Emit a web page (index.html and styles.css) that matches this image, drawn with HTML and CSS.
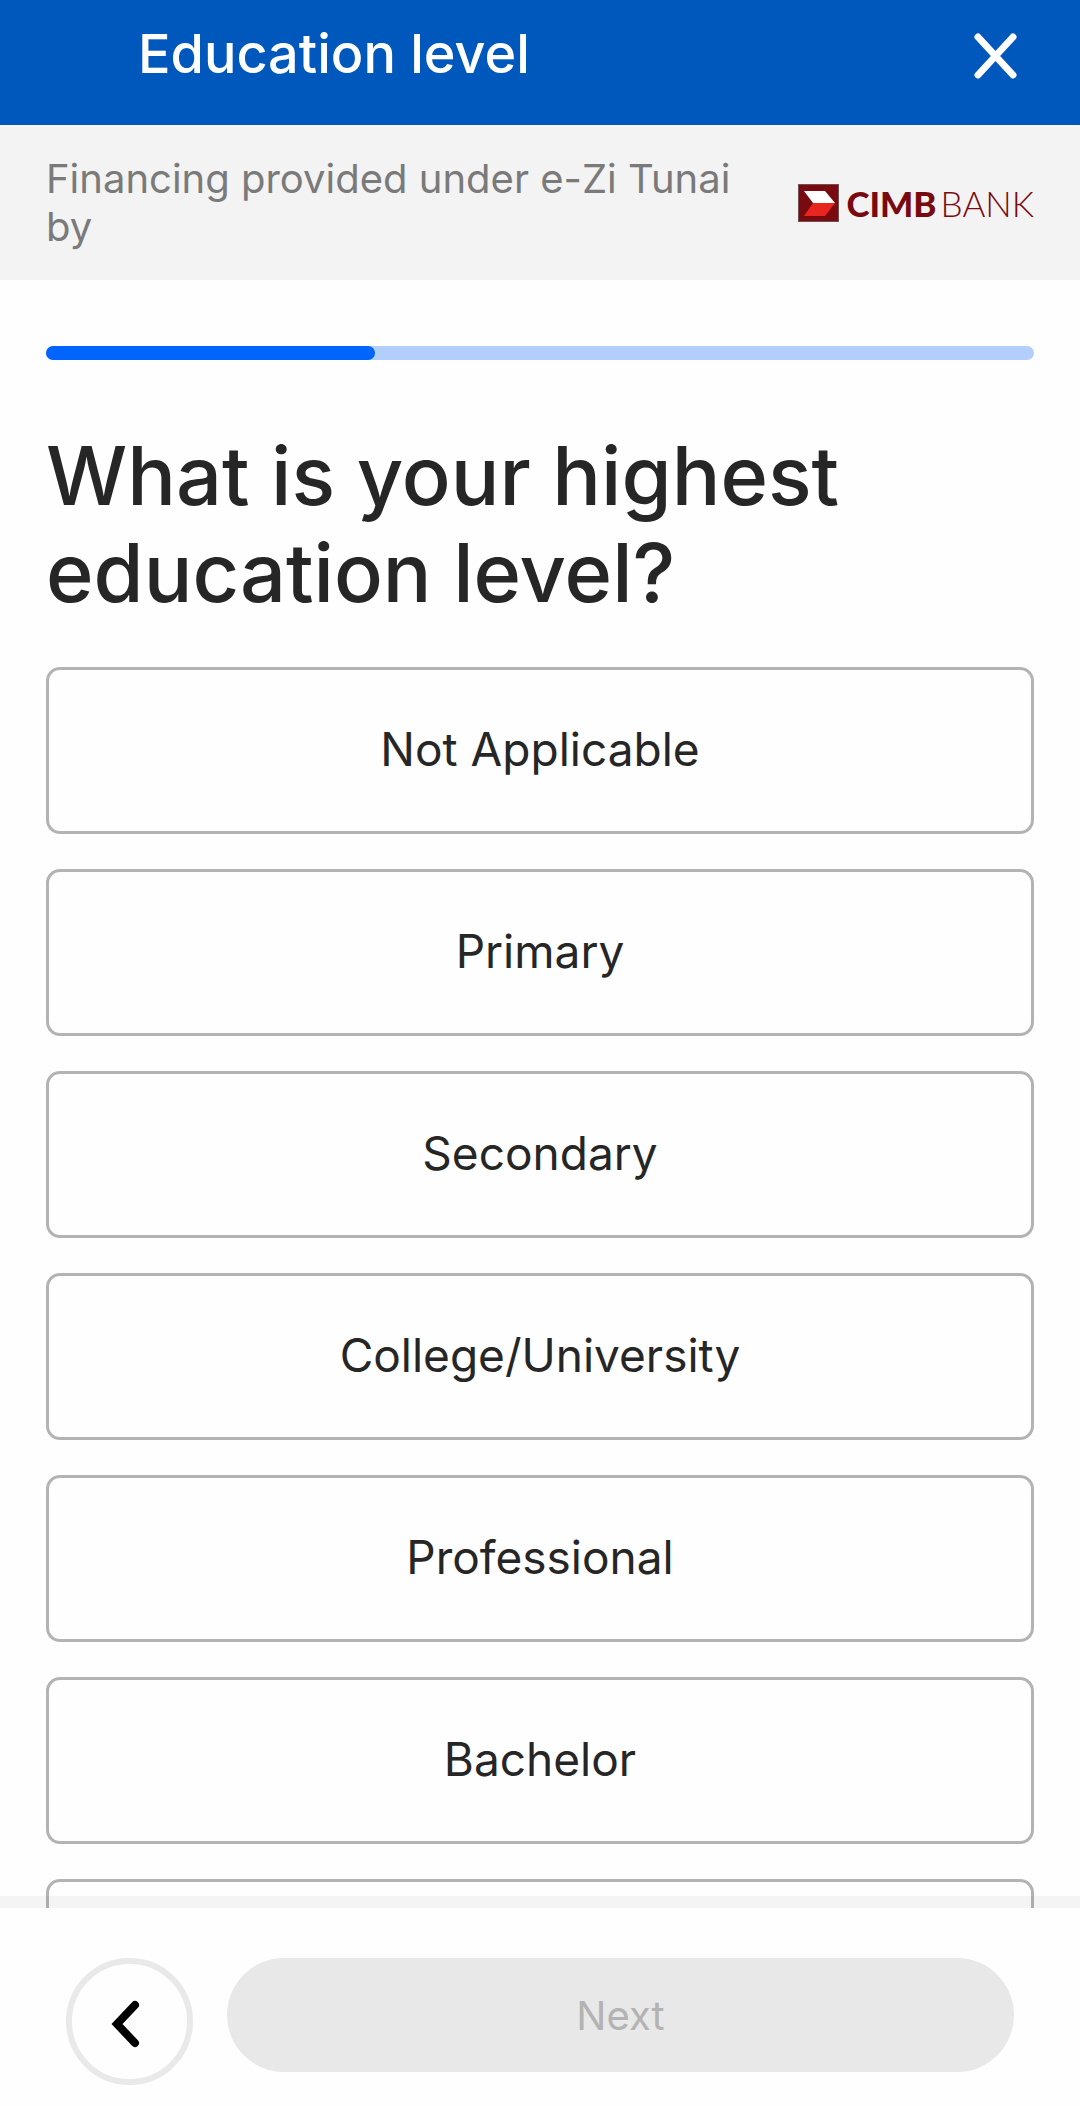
FILE: index.html
```html
<!DOCTYPE html>
<html lang="en">
<head>
    <meta charset="UTF-8">
    <meta name="viewport" content="width=device-width, initial-scale=1.0">
    <title>Education level</title>
    <link rel="stylesheet" href="styles.css">
</head>
<body>
    <header class="topbar">
        <h1 class="topbar-title">Education level</h1>
        <button class="close" type="button" aria-label="Close">
            <svg width="46" height="48" viewBox="0 0 46 48">
                <path d="M4 5 L39 43 M39 5 L4 43"/>
            </svg>
        </button>
    </header>

    <div class="provider">
        <p class="provider-text">Financing provided under e-Zi Tunai by</p>
        <div class="logo">
            <svg class="logo-mark" width="41" height="38" viewBox="0 0 41 38">
                <rect width="41" height="38" fill="#6f5055"/>
                <rect x="1" y="1" width="39" height="36" fill="#780a10"/>
                <path d="M6 7 H27 L37 19 H15 Z" fill="#fff"/>
                <path d="M15 19 H37 L27 32 H6 Z" fill="#e8251f"/>
            </svg>
            <div class="logo-name"><span class="logo-bold">CIMB</span><span class="logo-light">BANK</span></div>
        </div>
    </div>

    <main class="content">
        <div class="progress">
            <div class="progress-fill"></div>
        </div>
        <h2 class="question">What is your highest education level?</h2>
        <div class="options">
            <button class="option" type="button">Not Applicable</button>
            <button class="option" type="button">Primary</button>
            <button class="option" type="button">Secondary</button>
            <button class="option" type="button">College/University</button>
            <button class="option" type="button">Professional</button>
            <button class="option" type="button">Bachelor</button>
            <button class="option" type="button"></button>
        </div>
    </main>

    <footer class="actions">
        <button class="back" type="button" aria-label="Back">
            <svg width="30" height="48" viewBox="0 0 30 48">
                <path d="M24 5 L6 24 L24 43"/>
            </svg>
        </button>
        <button class="next" type="button" disabled>Next</button>
    </footer>
</body>
</html>
```
FILE: styles.css
```css
* {
    box-sizing: border-box;
}
body {
    display: flex;
    flex-direction: column;
    height: 100vh;
    margin: 0;
    font-family: Inter, "Liberation Sans", sans-serif;
    color: #262626;
    background-color: #fefefe;
}
h1, h2, p {
    margin: 0;
}
button {
    padding: 0;
    border: none;
    font-family: inherit;
    background: none;
    cursor: pointer;
}
svg {
    display: block;
}

/* header */
.topbar {
    display: flex;
    flex-shrink: 0;
    justify-content: space-between;
    align-items: flex-start;
    padding: 21px 60px 38px 138px;
    background-color: #0058bc;
}
.topbar-title {
    font-size: 54px;
    font-weight: 500;
    line-height: 66px;
    color: #fff;
}
.close {
    margin-top: 11px;
}
.close path {
    fill: none;
    stroke: #fff;
    stroke-width: 7;
    stroke-linecap: round;
}

.provider {
    display: flex;
    flex-shrink: 0;
    justify-content: space-between;
    align-items: center;
    gap: 40px;
    padding: 30px 46px 29px;
    background-color: #f3f3f3;
}
.provider-text {
    font-size: 40px;
    line-height: 48px;
    color: #7a7a7a;
}
.logo {
    display: flex;
    flex-shrink: 0;
    align-items: center;
    gap: 7px;
    font-family: Lato, sans-serif;
    font-size: 35px;
    line-height: 38px;
    color: #780a10;
}
.logo-name {
    display: flex;
    gap: 4px;
}
.logo-bold {
    font-weight: 900;
}
.logo-light {
    font-weight: 300;
}

/* question */
.content {
    flex: 1;
    min-height: 0;
    padding: 66px 46px 0;
    overflow-y: auto;
    scrollbar-width: none;
}
.progress {
    height: 14px;
    border-radius: 7px;
    background-color: #b2cffc;
}
.progress-fill {
    width: 33.33%;
    height: 100%;
    border-radius: 7px;
    background-color: #0064ff;
}
.question {
    margin: 68px 0 45px;
    font-size: 81px;
    font-weight: 500;
    line-height: 97px;
}
.options {
    display: flex;
    flex-direction: column;
    gap: 35px;
}
.option {
    height: 167px;
    flex-shrink: 0;
    padding-bottom: 3px;
    border: 3px solid #b3b3b3;
    border-radius: 14px;
    font-size: 46px;
    color: #262626;
}

/* footer */
.actions {
    display: flex;
    flex-shrink: 0;
    align-items: flex-start;
    gap: 34px;
    padding: 50px 66px 21px;
    background-color: #fefefe;
    box-shadow: 0 -12px 0 rgba(0, 0, 0, 0.04);
    z-index: 1;
}
.back {
    display: flex;
    flex-shrink: 0;
    justify-content: center;
    align-items: center;
    width: 127px;
    height: 127px;
    padding: 4px 8px 0 0;
    border: 6px solid #e9e9e9;
    border-radius: 50%;
}
.back path {
    fill: none;
    stroke: #000;
    stroke-width: 8;
    stroke-linecap: round;
}
.next {
    flex: 1;
    height: 114px;
    border-radius: 57px;
    font-size: 40px;
    color: #b3b3b3;
    background-color: #e8e8e8;
}
```
